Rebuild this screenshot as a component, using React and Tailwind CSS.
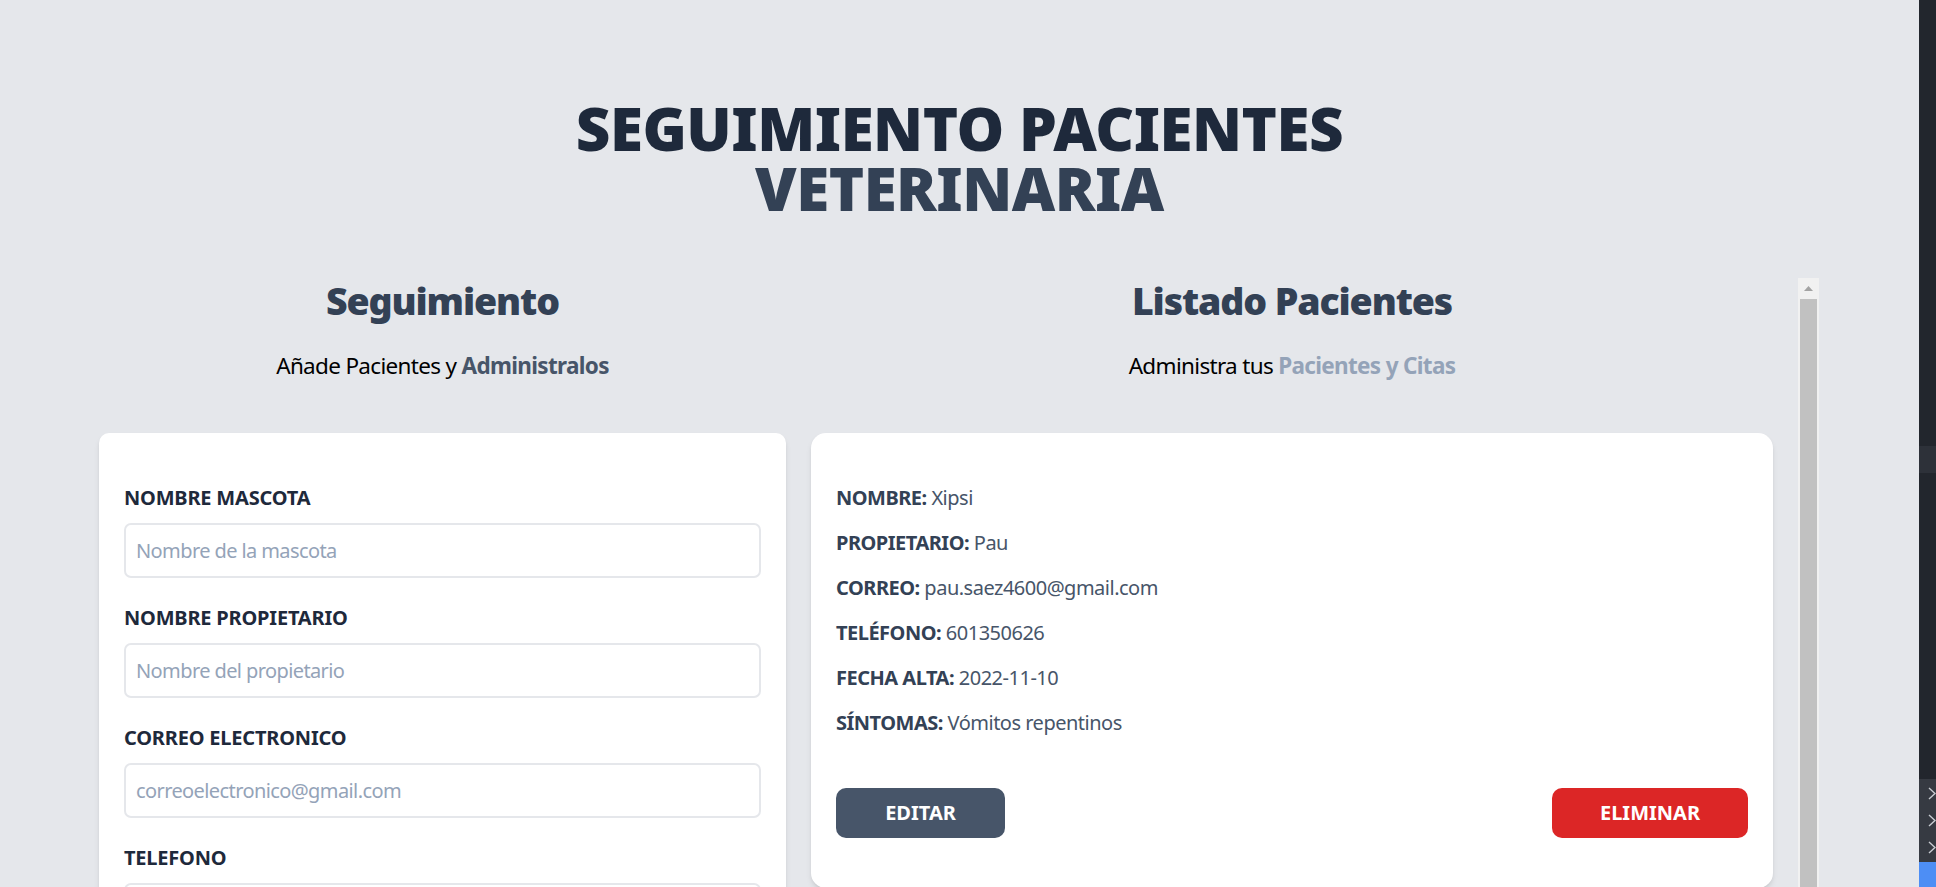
export default function App() {
  const fields = [
    { label: "Nombre Mascota", ph: "Nombre de la mascota", type: "text" },
    { label: "Nombre Propietario", ph: "Nombre del propietario", type: "text" },
    { label: "Correo Electronico", ph: "correoelectronico@gmail.com", type: "email" },
    { label: "Telefono", ph: "Telefono de contacto", type: "tel" },
    { label: "Fecha Alta", ph: "", type: "date" },
  ];
  const datos = [
    ["Nombre", "Xipsi"],
    ["Propietario", "Pau"],
    ["Correo", "pau.saez4600@gmail.com"],
    ["Teléfono", "601350626"],
    ["Fecha Alta", "2022-11-10"],
    ["Síntomas", "Vómitos repentinos"],
  ];
  return (
    <div className="flex h-screen w-full overflow-hidden bg-[#e5e7eb] font-['Noto_Sans','Open_Sans',sans-serif]">
      <main className="min-w-0 flex-1">
        <h1 className="pt-[98px] text-center text-[60px] font-black leading-[60px] tracking-[-0.008em]">
          <span className="block text-[#1e293b]">SEGUIMIENTO PACIENTES</span>
          <span className="block text-[#334155]">VETERINARIA</span>
        </h1>

        <div className="mt-[60px] flex pl-[99px]">
          {/* Formulario */}
          <div className="w-[687px] shrink-0">
            <h2 className="text-center text-[37.5px] font-black leading-[45px] tracking-[-0.03em] text-[#334155]">
              Seguimiento
            </h2>
            <p className="mb-[50px] mt-[25px] text-center text-[22.5px] leading-[35px] tracking-[-0.03em] text-black">
              Añade Pacientes y{" "}
              <span className="font-bold text-[#475569]">Administralos</span>
            </p>
            <form className="rounded-[10px] bg-white px-[25px] py-[50px] shadow-md">
              {fields.map((f) => (
                <div key={f.label} className="mb-[25px]">
                  <label className="block text-[20px] font-bold uppercase leading-[30px] tracking-[-0.01em] text-[#1e293b]">
                    {f.label}
                  </label>
                  <input
                    type={f.type}
                    placeholder={f.ph}
                    className="mt-[10px] block h-[55px] w-full rounded-[7px] border-2 border-[#e5e7eb] px-[10px] text-[20px] leading-[30px] tracking-[-0.03em] text-[#334155] outline-none placeholder:text-[#94a3b8]"
                  />
                </div>
              ))}
            </form>
          </div>

          {/* Listado */}
          <div className="flex h-[620px] w-[1033px] shrink-0">
            <div className="min-w-0 flex-1">
              <h2 className="text-center text-[37.5px] font-black leading-[45px] tracking-[-0.03em] text-[#334155]">
                Listado Pacientes
              </h2>
              <p className="mb-[50px] mt-[25px] text-center text-[22.5px] leading-[35px] tracking-[-0.03em] text-black">
                Administra tus{" "}
                <span className="font-bold text-[#94a3b8]">Pacientes y Citas</span>
              </p>
              <div className="mx-[25px] rounded-[15px] bg-white px-[25px] py-[50px] shadow-md">
                {datos.map(([k, v]) => (
                  <p
                    key={k}
                    className="mb-[15px] text-[20px] font-bold uppercase leading-[30px] tracking-[-0.025em] text-[#334155]"
                  >
                    {k}: <span className="font-normal normal-case text-[#475569]">{v}</span>
                  </p>
                ))}
                <div className="mt-[50px] flex justify-between">
                  <button className="h-[50px] w-[169px] rounded-[10px] bg-[#475569] text-[20px] font-bold uppercase leading-[30px] text-white">
                    Editar
                  </button>
                  <button className="h-[50px] w-[196px] rounded-[10px] bg-[#dc2626] text-[20px] font-bold uppercase leading-[30px] text-white">
                    Eliminar
                  </button>
                </div>
              </div>
            </div>
            {/* scrollbar */}
            <div className="flex w-[21px] shrink-0 flex-col bg-[#f1f1f1]">
              <div className="flex h-[21px] items-center justify-center">
                <svg width="9" height="5" viewBox="0 0 9 5">
                  <path d="M0 5 L4.5 0 L9 5 Z" fill="#a3a3a3" />
                </svg>
              </div>
              <div className="mx-[2px] flex-1 bg-[#c1c1c1]" />
            </div>
          </div>
        </div>
      </main>

      {/* dark side strip */}
      <aside className="flex w-[17px] shrink-0 flex-col bg-[#22262d]">
        <div className="h-[446px]" />
        <div className="h-[27px] bg-[#2d3139]" />
        <div className="h-[306px]" />
        <div className="flex h-[83px] flex-col gap-[14px] bg-[#363a42] pl-[9px] pt-[8px]">
          {[0, 1, 2].map((i) => (
            <svg key={i} width="8" height="13" viewBox="0 0 8 13">
              <path d="M1 1 L7 6.5 L1 12" stroke="#c8ccd2" strokeWidth="1.4" fill="none" />
            </svg>
          ))}
        </div>
        <div className="flex-1 bg-[#4d8ef5]" />
      </aside>
    </div>
  );
}
